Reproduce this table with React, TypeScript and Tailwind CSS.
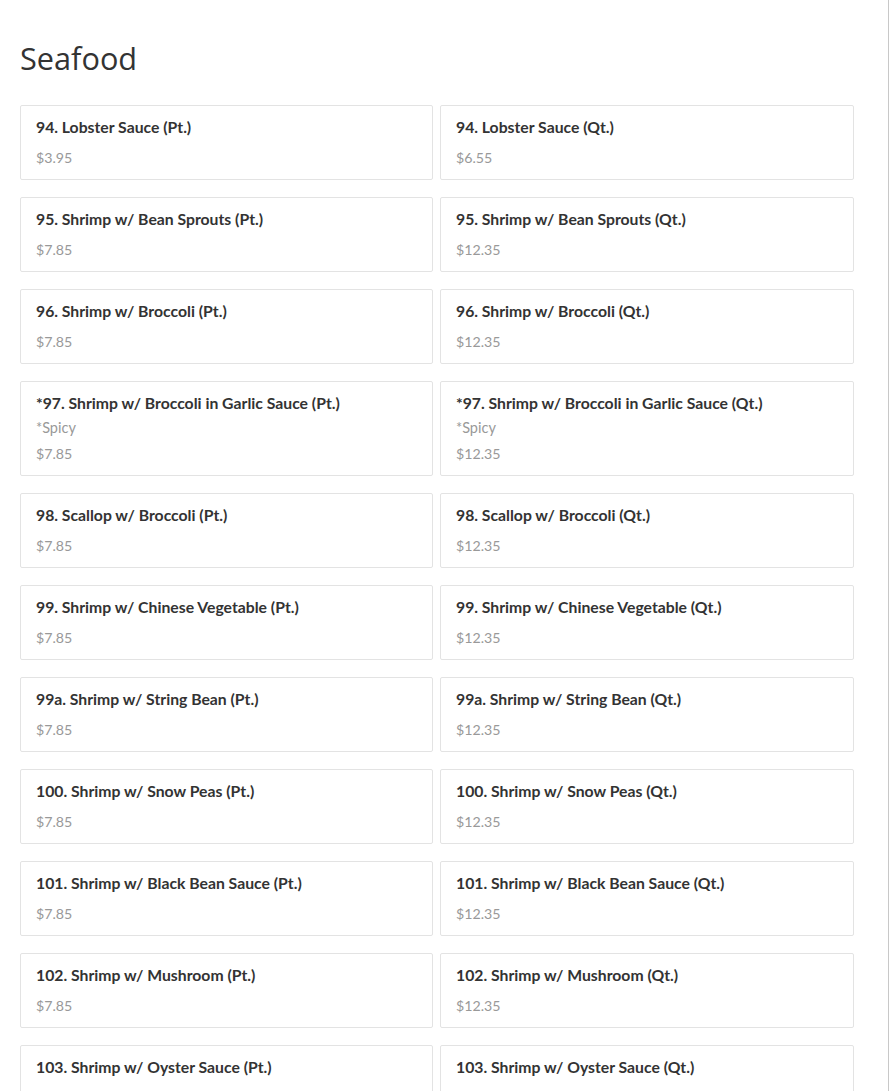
import React from "react";

type Item = { name: string; price: string; desc?: string };

const rows: [string, string, string, string?][] = [
  ["94. Lobster Sauce", "$3.95", "$6.55"],
  ["95. Shrimp w/ Bean Sprouts", "$7.85", "$12.35"],
  ["96. Shrimp w/ Broccoli", "$7.85", "$12.35"],
  ["*97. Shrimp w/ Broccoli in Garlic Sauce", "$7.85", "$12.35", "*Spicy"],
  ["98. Scallop w/ Broccoli", "$7.85", "$12.35"],
  ["99. Shrimp w/ Chinese Vegetable", "$7.85", "$12.35"],
  ["99a. Shrimp w/ String Bean", "$7.85", "$12.35"],
  ["100. Shrimp w/ Snow Peas", "$7.85", "$12.35"],
  ["101. Shrimp w/ Black Bean Sauce", "$7.85", "$12.35"],
  ["102. Shrimp w/ Mushroom", "$7.85", "$12.35"],
  ["103. Shrimp w/ Oyster Sauce", "$7.85", "$12.35"],
];

const items: Item[] = rows.flatMap(([n, p, q, d]) => [
  { name: `${n} (Pt.)`, price: p, desc: d },
  { name: `${n} (Qt.)`, price: q, desc: d },
]);

function Card({ item }: { item: Item }) {
  return (
    <div className="border border-[#e3e3e3] rounded-[2px] bg-white pl-[15px] pr-4 pt-[11px] pb-[11px]">
      <div className="text-[15.75px] leading-[20px] font-bold text-[#333]">{item.name}</div>
      {item.desc && (
        <div className="mt-[5px] text-[14.5px] leading-[20px] text-[#999]">{item.desc}</div>
      )}
      <div className={`${item.desc ? "mt-[6px]" : "mt-[11px]"} text-[14.2px] leading-[20px] text-[#999]`}>
        {item.price}
      </div>
    </div>
  );
}

export default function App() {
  return (
    <div className="w-[889px] min-h-screen border-r border-[#c8c8c8] bg-white">
      <div className="pl-5 w-[854px]" style={{ fontFamily: "Lato, 'Noto Sans', sans-serif" }}>
        <h1
          className="pt-[37px] text-[30.7px] leading-[42px] text-[#333] font-normal"
          style={{ fontFamily: "'Open Sans', sans-serif" }}
        >
          Seafood
        </h1>
        <div className="mt-[26px] grid grid-cols-[413px_414px] gap-x-[7px] gap-y-[17px]">
          {items.map((it, i) => (
            <Card key={i} item={it} />
          ))}
        </div>
      </div>
    </div>
  );
}
